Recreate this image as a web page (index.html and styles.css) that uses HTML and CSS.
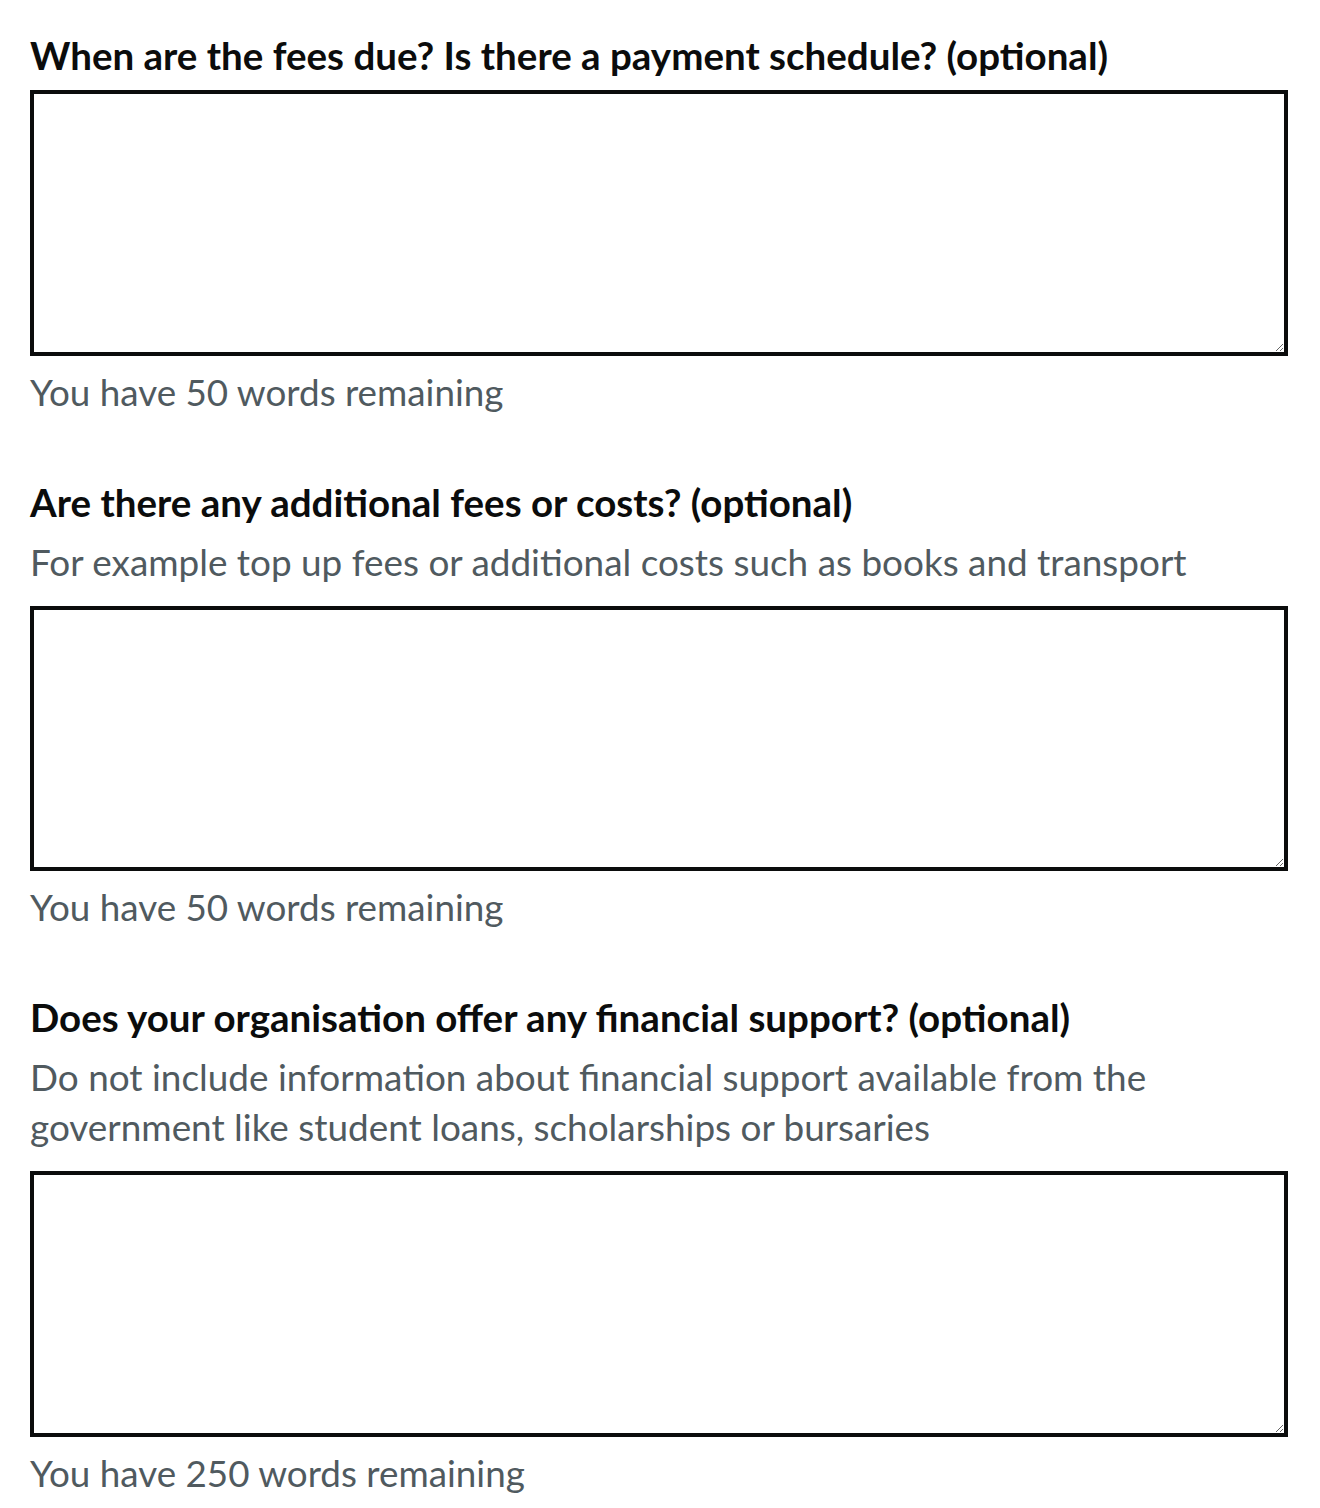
FILE: index.html
```html
<!DOCTYPE html>
<html lang="en">
<head>
<meta charset="utf-8">
<title>Fees</title>
<link rel="stylesheet" href="styles.css">
</head>
<body>
<main class="page">
  <div class="form-group">
    <label class="label" for="f1">When are the fees due? Is there a payment schedule? (optional)</label>
    <textarea class="textarea" id="f1" rows="5"></textarea>
    <div class="count">You have 50 words remaining</div>
  </div>
  <div class="form-group">
    <label class="label" for="f2">Are there any additional fees or costs? (optional)</label>
    <div class="hint">For example top up fees or additional costs such as books and transport</div>
    <textarea class="textarea" id="f2" rows="5"></textarea>
    <div class="count">You have 50 words remaining</div>
  </div>
  <div class="form-group">
    <label class="label" for="f3">Does your organisation offer any financial support? (optional)</label>
    <div class="hint">Do not include information about financial support available from the government like student loans, scholarships or bursaries</div>
    <textarea class="textarea" id="f3" rows="5"></textarea>
    <div class="count">You have 250 words remaining</div>
  </div>
</main>
</body>
</html>
```
FILE: styles.css
```css
html, body {
  margin: 0;
  padding: 0;
  background: #ffffff;
}
body {
  font-family: "Lato", "Liberation Sans", Arial, sans-serif;
  color: #0b0c0c;
  -webkit-font-smoothing: antialiased;
}
.page {
  padding: 30px 32px 0 30px;
}
.form-group {
  display: flex;
  flex-direction: column;
  margin-bottom: 60px;
}
.form-group:last-child {
  margin-bottom: 0;
}
.label {
  display: block;
  font-weight: 700;
  font-size: 38.5px;
  line-height: 50px;
  margin-bottom: 10px;
  color: #0b0c0c;
}
.hint {
  font-size: 36.9px;
  line-height: 50px;
  color: #505a5f;
  margin-bottom: 19px;
}
.textarea {
  box-sizing: border-box;
  display: block;
  width: 100%;
  height: 265.5px;
  margin: 0;
  padding: 10px;
  border: 4px solid #0b0c0c;
  border-radius: 0;
  font-family: inherit;
  font-size: 38px;
  line-height: 1.25;
  background: #ffffff;
  resize: vertical;
}
.count {
  margin-top: 11px;
  font-size: 36.8px;
  line-height: 50px;
  color: #505a5f;
}
```
